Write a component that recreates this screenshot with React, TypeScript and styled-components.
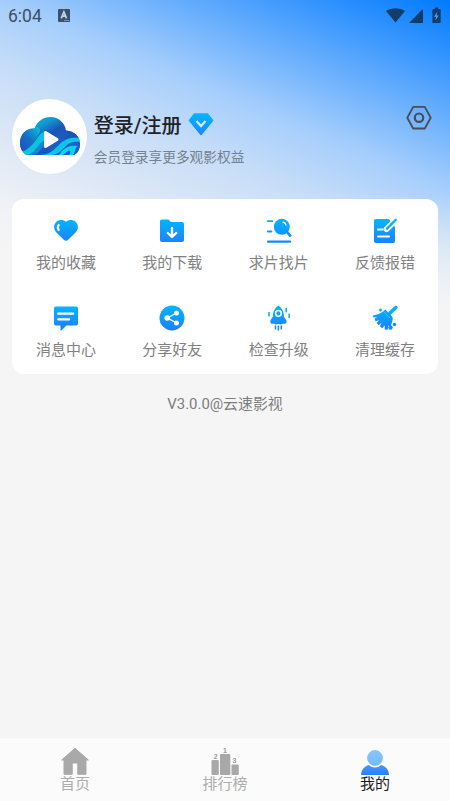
import { ReactNode } from "react";
import styled, { createGlobalStyle } from "styled-components";

const GlobalStyle = createGlobalStyle`
	* {
		box-sizing: border-box;
	}

	body {
		margin: 0;
		font-family: Roboto, "Noto Sans CJK SC", sans-serif;
		background: #f5f5f5;
	}

	svg {
		display: block;
	}
`;

const Page = styled.div`
	display: flex;
	flex-direction: column;
	height: 801px;
	width: 450px;
	overflow: hidden;
	background: linear-gradient(
				180deg,
				rgba(245, 245, 245, 0) 0%,
				rgba(245, 245, 245, 0) 62%,
				#f5f5f5 100%
			)
			0 0 / 450px 310px no-repeat,
		linear-gradient(
				202.8deg,
				#007aff 0%,
				#a6cefc 38%,
				#c6ddf8 51%,
				#dce7f6 65%,
				#eef1f6 78%,
				#f5f5f5 88%
			)
			0 0 / 450px 310px no-repeat,
		#f5f5f5;
`;

const StatusBar = styled.header`
	display: flex;
	align-items: center;
	justify-content: space-between;
	height: 31px;
	padding: 0 9px 0 8px;

	.side {
		display: flex;
		align-items: center;
	}

	.time {
		width: 50px;
		font-size: 17.5px;
		line-height: 31px;
		padding-top: 1px;
		color: #3c4f66;
	}
`;

const Profile = styled.section`
	display: flex;
	align-items: flex-start;
	padding: 67.5px 18.500px 0 12.3px;
	height: 168px;

	.gear {
		margin: 6px 0 0 auto;
	}
`;

const Avatar = styled.div`
	display: flex;
	align-items: center;
	justify-content: center;
	width: 75px;
	height: 75px;
	border-radius: 50%;
	background: white;
`;

const ProfileText = styled.div`
	display: flex;
	flex-direction: column;
	margin: 12px 0 0 6.5px;

	.title {
		display: flex;
		align-items: center;
		gap: 6px;
		font-size: 20px;
		font-weight: 500;
		line-height: 30px;
		color: #1d2229;

		svg {
			margin-top: -2px;
		}
	}

	.hint {
		margin-top: 6px;
		font-size: 13.7px;
		line-height: 20px;
		color: #74818f;
	}
`;

const Card = styled.section`
	display: grid;
	grid-template-columns: repeat(4, 1fr);
	grid-auto-rows: 87.5px;
	margin: 0 12.3px;
	border-radius: 12px;
	background: white;
`;

const CardItem = styled.div`
	display: flex;
	flex-direction: column;
	align-items: center;
	padding: 18.5px 0 0 1px;

	.label {
		margin-top: 8px;
		font-size: 15px;
		line-height: 22px;
		color: #818181;
	}
`;

const Version = styled.p`
	margin: 19px 0 0;
	text-align: center;
	font-size: 14.9px;
	line-height: 22px;
	color: #7d7d7d;
`;

const NavBar = styled.nav`
	display: grid;
	grid-template-columns: repeat(3, 1fr);
	height: 63px;
	margin-top: auto;
	background: #fbfbfb;
`;

const NavItem = styled.div<{ $active?: boolean }>`
	display: flex;
	flex-direction: column;
	align-items: center;
	padding-top: 9px;
	font-size: 15px;
	line-height: 18px;
	color: ${(props) => (props.$active ? "#1c1c1c" : "#adadad")};
`;

function StatusIcons() {
	return (
		<svg width="55" height="18" viewBox="0 0 55 18" fill="#123c6c">
			<path d="M0 4C5.400 .2 13.600 .2 19 4L9.500 15.500Z" />
			<path d="M23 16 36 2.800Q37 2 37 3V16Z" />
			<path d="M47.300 2.100h1.500V.5h3.400v1.600h1.700c.6 0 .8.300.8.800v12.300c0 .6-.3.900-.8.900h-6.600c-.6 0-.9-.3-.9-.9V2.900c0-.5.300-.8.900-.8Z" />
			<path d="m51.400 4.500-3.300 5.200h2l-.8 4.100 3.300-5.300h-2Z" fill="#4d9dfa" />
		</svg>
	);
}

function KeyboardIcon() {
	return (
		<svg width="12" height="13" viewBox="0 0 12 13">
			<rect width="12" height="13" rx="1" fill="#3b5069" />
			<path
				d="M3.200 9.300 5.900 3 8.600 9.300M4.200 7.200h3.400"
				fill="none"
				stroke="#b9d7f8"
				strokeWidth="1.700"
			/>
			<path d="M6 11.500h5" stroke="#8ba6c5" strokeWidth=".8" />
		</svg>
	);
}

function CloudLogo() {
	return (
		<svg width="60" height="38" viewBox="0 0 60 38">
			<defs>
				<linearGradient id="cloudTop" x1=".2" y1="0" x2=".8" y2=".7">
					<stop offset="0" stopColor="#0dbdd2" />
					<stop offset=".3" stopColor="#0f97d0" />
					<stop offset=".55" stopColor="#1c55b8" />
					<stop offset="1" stopColor="#1a60c4" />
				</linearGradient>
				<linearGradient id="cloudLeft" x1="0" y1="1" x2="1" y2="0">
					<stop offset="0" stopColor="#1b4fc4" />
					<stop offset=".5" stopColor="#1471c5" />
					<stop offset="1" stopColor="#0bc5da" />
				</linearGradient>
				<clipPath id="cloudShape">
					<path d="M7 38C2.500 36 0 31.500 0 25.500 0 17 6.500 11 14.500 11.500 17 4.500 23 0 30.500 0 38.500 0 45 6 46 13.500 54 14 60 19.500 60 26.500 60 32 57.500 36.500 54 38Z" />
				</clipPath>
			</defs>
			<g clipPath="url(#cloudShape)">
				<path d="M0 0h60v38H0Z" fill="url(#cloudTop)" />
				<path d="M0 10h17c3 1 4 3 2 7L8 34H0Z" fill="url(#cloudLeft)" />
				<path d="M2 35C11 31 14 25 18 20c2-3 4-5 7-6l1 9C20 27 17 38 10 38H4Z" fill="#08c4df" />
				<path d="M8 38c8-3 9-11 17-15l1 5c-4 2-6 7-11 10Z" fill="#1384d3" />
				<path d="M14 38c7-2 8-8 14-9l3 6-4 3Z" fill="#1b55c5" />
				<path d="M46 13c3 5 1 8-3 10 5-3 11-4 17-2V10H48Z" fill="#1b55b8" />
				<path d="M20 38c12 0 17-9 22-13 5-4 11-5 18-4v4c-9-1-13 2-15 6-3 4-6 6-10 7Z" fill="#0bc6ea" />
				<path d="M32 38c8-1 10-6 14-9 4-4 9-4 14-3v12Z" fill="#1c5bcb" />
				<path d="M42 34c5-5 9-6 16-5-4 2-2 5-5 9h-4c2-3 2-5-1-4l-5 4h-4Z" fill="#08d5f0" />
			</g>
			<path
				d="M25.500 15.500v14L37 22.500Z"
				fill="white"
				stroke="white"
				strokeWidth="3"
				strokeLinejoin="round"
			/>
		</svg>
	);
}

function VipBadge() {
	return (
		<svg width="26" height="23" viewBox="0 0 26 23">
			<path
				d="M6.500 1h13L24.500 7.500 13 21.500 1.500 7.500Z"
				fill="url(#blue)"
				stroke="url(#blue)"
				strokeWidth="1.600"
				strokeLinejoin="round"
			/>
			<path d="m8.500 8 4.500 5 4.500-5" fill="none" stroke="#d3ecff" strokeWidth="2.200" />
		</svg>
	);
}

function GearIcon() {
	return (
		<svg className="gear" width="26" height="26" viewBox="0 0 26 26">
			<g fill="none" stroke="#494d54" strokeLinejoin="round">
				<path d="M7.200 1.900h11.600L24.700 12.700l-5.900 10.800H7.200L1.300 12.700Z" strokeWidth="1.800" />
				<circle cx="13" cy="12.700" r="4.200" strokeWidth="2.200" />
			</g>
		</svg>
	);
}

// gradient shared by the card icons and the vip badge
function BlueGradient() {
	return (
		<svg width="0" height="0" style={{ position: "absolute" }}>
			<defs>
				<linearGradient id="blue" gradientUnits="userSpaceOnUse" x1="0" y1="1" x2="0" y2="25">
					<stop offset="0" stopColor="#02b6ff" />
					<stop offset="1" stopColor="#1c80ff" />
				</linearGradient>
			</defs>
		</svg>
	);
}

function CardIcon({ children }: { children: ReactNode }) {
	return (
		<svg width="26" height="26" viewBox="0 0 26 26" fill="url(#blue)" strokeLinecap="round">
			{children}
		</svg>
	);
}

const items = [
	{
		label: "我的收藏",
		icon: (
			<>
				<path d="M13 3.800C15.500 1.500 19.500 1.300 22.300 3.500 25.700 6.300 25.600 11 22.800 14.200L15.200 21.700C13.500 23.200 12.500 23.200 10.800 21.700L3.200 14.200C.4 11 .3 6.300 3.700 3.500 6.500 1.300 10.500 1.500 13 3.800Z" />
				<path d="M5.600 7C4.700 8.500 4.700 10.500 5.600 12" fill="none" stroke="white" strokeWidth="2.200" />
			</>
		),
	},
	{
		label: "我的下载",
		icon: (
			<>
				<path d="M2.800 1.500h6.500L12 4h11c1.300 0 2 .7 2 2v16c0 1.300-.7 2-2 2H3c-1.300 0-2-.7-2-2V3.300c0-1.100.7-1.800 1.800-1.800Z" />
				<path d="M13 10v8M8.800 15l4.200 4 4.200-4" fill="none" stroke="white" strokeWidth="2.400" strokeLinejoin="round" />
			</>
		),
	},
	{
		label: "求片找片",
		icon: (
			<>
				<circle cx="15.800" cy="8.800" r="8" />
				<path d="m21 14 3.200 3.600" stroke="#108fff" strokeWidth="2.600" />
				<path d="M17.200 4.300c1.500.3 2.500 1.300 2.800 2.800" fill="none" stroke="white" strokeWidth="1.400" />
				<path d="M1.800 3.200h4.500" stroke="#04b0ff" strokeWidth="1.800" />
				<path d="M1.800 13.500h3.700" stroke="#0b9cff" strokeWidth="1.800" />
				<path d="M2 23.700h22" stroke="#1788ff" strokeWidth="2.200" />
			</>
		),
	},
	{
		label: "反馈报错",
		icon: (
			<>
				<path d="M4 1h13l6 8v14c0 1.300-.7 2-2 2H4c-1.300 0-2-.7-2-2V3c0-1.300.7-2 2-2Z" />
				<path d="M23.500 2.200 14.500 11.200" stroke="white" strokeWidth="5.800" />
				<path d="M23.700 1.800 15 10.600" stroke="#06abff" strokeWidth="2.300" />
				<path d="M6 11.500h4.500M6 18.500h11" stroke="white" strokeWidth="2" />
			</>
		),
	},
	{
		label: "消息中心",
		icon: (
			<>
				<path d="M3 1.500h20c1.300 0 2 .7 2 2v15c0 1.300-.7 2-2 2H13.500L8.500 25.300c-.5.500-1 .2-1-.4v-4.400H3c-1.300 0-2-.7-2-2v-15c0-1.300.7-2 2-2Z" />
				<path d="M5.200 8.700h15M5.200 14.300h11" stroke="white" strokeWidth="2.200" />
			</>
		),
	},
	{
		label: "分享好友",
		icon: (
			<>
				<circle cx="13" cy="13" r="12.500" />
				<path d="M17.500 8 8.200 13l9.300 4.800" fill="none" stroke="white" strokeWidth="1.300" />
				<g fill="white">
					<circle cx="17.500" cy="8" r="2.500" />
					<circle cx="8.200" cy="13" r="2.800" />
					<circle cx="17.500" cy="17.900" r="2.500" />
				</g>
			</>
		),
	},
	{
		label: "检查升级",
		icon: (
			<>
				<path d="M12.400.5C15.800 3 18 6.500 17.900 11.500L20.300 15.200C20.800 16.300 20.500 18 19.500 18.800H16.500C15.500 20 14 19 12.400 19 10.800 19 9.300 20 8.300 18.800H5.300C4.300 18 4 16.300 4.500 15.200L6.900 11.500C6.800 6.500 9 3 12.400.5Z" />
				<circle cx="12.400" cy="8.400" r="2.800" fill="none" stroke="white" strokeWidth="1.500" />
				<g strokeWidth="1.500" strokeLinecap="butt">
					<path d="M3 7v4.500M20.200 2.800v4.500M23.200 8.500v4.500" stroke="#07a8ff" />
					<path d="M9.500 20.500v4M12.400 20.500v5M15.300 20.500v4" stroke="#1a84ff" />
				</g>
			</>
		),
	},
	{
		label: "清理缓存",
		icon: (
			<>
				<path d="m17 9 6.800-6.500" stroke="#04b0ff" strokeWidth="3.600" />
				<path d="M13.500 4.500 20.700 12.300C20.800 15.500 20 18.500 18.300 21.500L16.200 20.500 15.800 24.800 12.600 24.500 12.800 20.500 10.200 23.300 7.800 21.300 9.800 17.800 6.700 20.300 4.500 18 7.200 15.200 3.500 16.200 2.500 13.500 5.200 12.600 1.200 12.200.9 10.500C5.500 9.800 10 8 13.500 4.500Z" />
				<path d="m12 7 6.200 6.500" stroke="#65c4ff" strokeWidth=".7" />
				<circle cx="8.500" cy="5" r="1.500" />
				<circle cx="22.500" cy="19.500" r="1.700" />
				<circle cx="18.500" cy="22.500" r="2.200" />
			</>
		),
	},
];

function HomeIcon() {
	return (
		<svg width="30" height="28" viewBox="0 0 30 28">
			<path
				d="M15 1.300 28.300 13H26v14.300h-8.200V16h-5.600v11.300H4V13H1.700Z"
				fill="#a9a9a9"
				stroke="#a9a9a9"
				strokeLinejoin="round"
			/>
		</svg>
	);
}

function RankIcon() {
	return (
		<svg width="30" height="28" viewBox="0 0 30 28" fill="#a8a8a8">
			<rect x="1.500" y="13" width="7.300" height="15" rx="1" />
			<rect x="10" y="7" width="10.300" height="21" rx="1" />
			<rect x="21.500" y="17.500" width="7.300" height="10.500" rx="1" />
			<g
				fontSize="7"
				fontWeight="700"
				fontFamily="Liberation Sans, sans-serif"
				textAnchor="middle"
				fill="#9a9a9a"
			>
				<text x="5.700" y="12">2</text>
				<text x="15" y="6">1</text>
				<text x="24.500" y="16.300">3</text>
			</g>
		</svg>
	);
}

function UserIcon() {
	return (
		<svg width="30" height="28" viewBox="0 0 30 28">
			<defs>
				<linearGradient id="userBody" x1="0" y1="0" x2="0" y2="1">
					<stop offset="0" stopColor="#489af5" />
					<stop offset="1" stopColor="#277fff" />
				</linearGradient>
				<linearGradient id="userHead" x1="0" y1="0" x2="0" y2="1">
					<stop offset="0" stopColor="#87c7fc" />
					<stop offset="1" stopColor="#75b9fd" />
				</linearGradient>
			</defs>
			<path d="M1 28.500C1 21.500 6 17 15 17S29 21.500 29 28.500Z" fill="url(#userBody)" />
			<circle cx="15" cy="11" r="8.700" fill="url(#userHead)" stroke="#fbfbfb" strokeWidth="1.600" />
		</svg>
	);
}

export default function App() {
	return (
		<Page>
			<GlobalStyle />
			<BlueGradient />
			<StatusBar>
				<div className="side">
					<span className="time">6:04</span>
					<KeyboardIcon />
				</div>
				<StatusIcons />
			</StatusBar>
			<Profile>
				<Avatar>
					<CloudLogo />
				</Avatar>
				<ProfileText>
					<div className="title">
						登录/注册
						<VipBadge />
					</div>
					<div className="hint">会员登录享更多观影权益</div>
				</ProfileText>
				<GearIcon />
			</Profile>
			<Card>
				{items.map((item) => (
					<CardItem key={item.label}>
						<CardIcon>{item.icon}</CardIcon>
						<div className="label">{item.label}</div>
					</CardItem>
				))}
			</Card>
			<Version>V3.0.0@云速影视</Version>
			<NavBar>
				<NavItem>
					<HomeIcon />
					首页
				</NavItem>
				<NavItem>
					<RankIcon />
					排行榜
				</NavItem>
				<NavItem $active>
					<UserIcon />
					我的
				</NavItem>
			</NavBar>
		</Page>
	);
}
